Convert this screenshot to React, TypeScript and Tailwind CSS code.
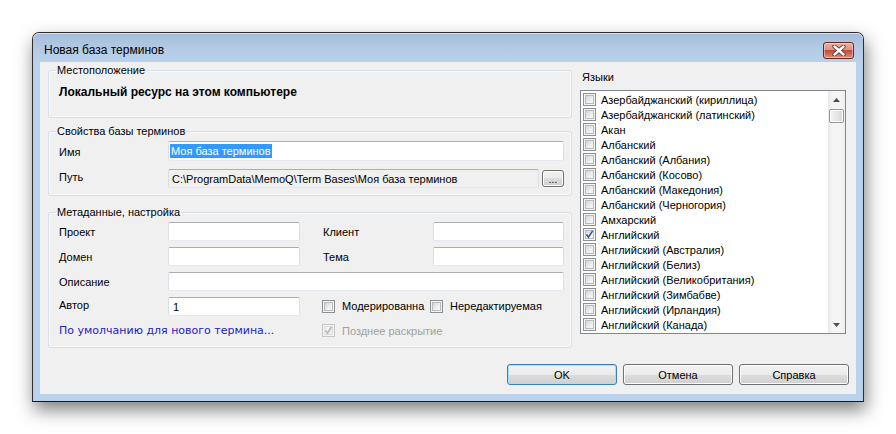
import React from "react";

const langs: [string, boolean][] = [
  ["Азербайджанский (кириллица)", false],
  ["Азербайджанский (латинский)", false],
  ["Акан", false],
  ["Албанский", false],
  ["Албанский (Албания)", false],
  ["Албанский (Косово)", false],
  ["Албанский (Македония)", false],
  ["Албанский (Черногория)", false],
  ["Амхарский", false],
  ["Английский", true],
  ["Английский (Австралия)", false],
  ["Английский (Белиз)", false],
  ["Английский (Великобритания)", false],
  ["Английский (Зимбабве)", false],
  ["Английский (Ирландия)", false],
  ["Английский (Канада)", false],
];

function Check({ checked = false, disabled = false }: { checked?: boolean; disabled?: boolean }) {
  return (
    <span
      className={
        "relative block w-[13px] h-[13px] shrink-0 border p-[1px] " +
        (disabled ? "border-[#c6c6c6] bg-[#f4f4f4]" : "border-[#8e8f8f] bg-[#f4f4f4]")
      }
    >
      <span
        className={
          "block w-full h-full border " +
          (disabled
            ? "border-[#dedede] bg-[#f0f0f0]"
            : "border-[#b7bbc0] bg-[linear-gradient(135deg,#d4d6da,#eeeff0_60%,#f8f8f8)]")
        }
      />
      {checked && (
        <svg className="absolute left-[1px] top-[1px]" width="9" height="9" viewBox="0 0 9 9">
          <path
            d="M1.5 4.5 L3.5 7.2 L7.6 0.8"
            fill="none"
            stroke={disabled ? "#b4b4b4" : "#3d4f86"}
            strokeWidth="1.5"
          />
        </svg>
      )}
    </span>
  );
}

function TextBox({ w, h = 19, children, readOnly = false }: { w?: string; h?: number; children?: React.ReactNode; readOnly?: boolean }) {
  return (
    <div
      className={
        "flex items-center rounded-[2px] border border-t-[#abadb3] border-x-[#dbdfe6] border-b-[#e3e9ef] pl-[1px] leading-[14px] whitespace-nowrap overflow-hidden " +
        (readOnly ? "bg-[#f0f0f0] " : "bg-white ") +
        (w ?? "flex-1")
      }
      style={{ height: h }}
    >
      {children}
    </div>
  );
}

function WinButton({ children, def = false, className = "" }: { children: React.ReactNode; def?: boolean; className?: string }) {
  return (
    <div
      className={
        "flex items-center justify-center rounded-[3px] border leading-[14px] bg-[linear-gradient(#f2f2f2,#ebebeb_50%,#dddddd_50%,#cfcfcf)] " +
        (def
          ? "border-[#3c7fb1] shadow-[inset_0_0_0_1px_#a9def4] "
          : "border-[#707070] shadow-[inset_0_0_0_1px_#fcfcfc] ") +
        className
      }
    >
      {children}
    </div>
  );
}

function Group({ title, h, children, className = "" }: { title: string; h: number; children: React.ReactNode; className?: string }) {
  return (
    <fieldset
      className={"border border-[#d5dfe5] rounded-[3px] shadow-[inset_0_0_0_1px_#fafafa] " + className}
      style={{ height: h }}
    >
      <legend className="ml-[7px] px-[1px] leading-[14px]">{title}</legend>
      {children}
    </fieldset>
  );
}

export default function App() {
  return (
    <div className="w-[896px] h-[434px] bg-white overflow-hidden pl-[32px] pt-[32px] font-['Liberation_Sans',Arial,sans-serif] text-[11px] text-black">
      <div className="w-[832px] h-[370px] flex flex-col rounded-t-[7px] border border-[#2e2e2e] border-b-[#1a1a1a] bg-[#b9d1ea] shadow-[2px_8px_18px_rgba(0,0,0,0.5)]">
        {/* title bar */}
        <div className="h-[29px] shrink-0 flex items-start justify-between pl-[11px] pr-[9px] rounded-t-[6px] bg-[linear-gradient(#a4bcda,#b5cce6_60%,#b9d1ea)] shadow-[inset_0_1px_0_rgba(255,255,255,0.55)]">
          <span className="mt-[10px] leading-[15px] text-[12px]">Новая база терминов</span>
          <div className="mt-[9px] w-[31px] h-[17px] rounded-[3px] border border-[#6b2a20] bg-[linear-gradient(#eab0a3,#dc9382_45%,#c24a34_46%,#c75a44_62%,#d99484)] flex items-center justify-center shadow-[inset_0_0_0_1px_rgba(255,220,210,0.5)]">
            <svg width="14" height="11" viewBox="0 0 14 11">
              <path d="M2.5 1.5 L11.5 9.5 M11.5 1.5 L2.5 9.5" stroke="#4a3a38" strokeWidth="4.2" strokeLinecap="round" />
              <path d="M2.5 1.5 L11.5 9.5 M11.5 1.5 L2.5 9.5" stroke="#ffffff" strokeWidth="2.4" strokeLinecap="round" />
            </svg>
          </div>
        </div>

        {/* client */}
        <div className="mx-[7px] mb-[7px] flex-1 bg-[#f0f0f0] flex flex-col pt-[1px]">
          <div className="flex h-[285px]">
            {/* left column */}
            <div className="ml-[8px] w-[524px] flex flex-col">
              <Group title="Местоположение" h={55}>
                <div className="pl-[10px] pt-[8px] font-bold text-[12px] leading-[14px]">Локальный ресурс на этом компьютере</div>
              </Group>

              <Group title="Свойства базы терминов" h={72} className="mt-[6px]">
                <div className="pl-[10px] pr-[7px] pt-[3px] flex flex-col">
                  <div className="flex items-center h-[20px]">
                    <span className="w-[109px] leading-[14px] mt-[1px]">Имя</span>
                    <TextBox h={20}>
                      <span className="bg-[#3399ff] text-white px-[1px]">Моя база терминов</span>
                    </TextBox>
                  </div>
                  <div className="flex items-center h-[19px] mt-[8px]">
                    <span className="w-[109px] leading-[14px] -mt-[4px]">Путь</span>
                    <TextBox h={19} readOnly>
                      <span className="pl-[2px]">C:\ProgramData\MemoQ\Term Bases\Моя база терминов</span>
                    </TextBox>
                    <WinButton className="ml-[3px] w-[22px] h-[17px] text-[10px]">
                      <span className="mt-[2px]">...</span>
                    </WinButton>
                  </div>
                </div>
              </Group>

              <Group title="Метаданные, настройка" h={143} className="mt-[9px]">
                <div className="pl-[10px] pt-[3px] flex flex-col gap-[6px]">
                  <div className="flex items-center h-[19px]">
                    <span className="w-[109px] leading-[14px]">Проект</span>
                    <TextBox w="w-[132px]" />
                    <span className="ml-[23px] w-[110px] leading-[14px]">Клиент</span>
                    <TextBox w="w-[131px]" />
                  </div>
                  <div className="flex items-center h-[19px]">
                    <span className="w-[109px] leading-[14px]">Домен</span>
                    <TextBox w="w-[132px]" />
                    <span className="ml-[23px] w-[110px] leading-[14px]">Тема</span>
                    <TextBox w="w-[131px]" />
                  </div>
                  <div className="flex items-center h-[19px]">
                    <span className="w-[109px] leading-[14px]">Описание</span>
                    <TextBox w="w-[396px]" />
                  </div>
                  <div className="flex items-center h-[19px]">
                    <span className="w-[109px] leading-[14px] -mt-[3px]">Автор</span>
                    <TextBox w="w-[132px]">
                      <span className="pl-[3px]">1</span>
                    </TextBox>
                    <div className="ml-[22px] w-[108px] flex items-center">
                      <Check />
                      <span className="ml-[7px] leading-[14px] -mt-[2px]">Модерированна</span>
                    </div>
                    <div className="flex items-center">
                      <Check />
                      <span className="ml-[7px] leading-[14px] -mt-[2px]">Нередактируемая</span>
                    </div>
                  </div>
                  <div className="flex items-center h-[19px] -mt-[1px]">
                    <span className="w-[263px] leading-[14px] font-['DejaVu_Sans',Verdana,sans-serif] text-[11px] text-[#2222c4]">
                      По умолчанию для нового термина...
                    </span>
                    <Check checked disabled />
                    <span className="ml-[7px] leading-[14px] text-[#a0a0a0]">Позднее раскрытие</span>
                  </div>
                </div>
              </Group>
            </div>

            {/* right column */}
            <div className="ml-[8px] w-[266px] flex flex-col pt-[7px]">
              <span className="pl-[2px] leading-[14px]">Языки</span>
              <div className="mt-[6px] h-[244px] flex border border-[#828790] bg-white overflow-hidden">
                <div className="flex-1 flex flex-col pt-[1px] pl-[2px] overflow-hidden">
                  {langs.map(([name, c]) => (
                    <div key={name} className="h-[15px] shrink-0 flex items-center">
                      <Check checked={c} />
                      <span className="ml-[5px] leading-[14px] whitespace-nowrap">{name}</span>
                    </div>
                  ))}
                </div>
                <div className="w-[17px] flex flex-col bg-[linear-gradient(90deg,#e9e9e9,#f5f5f5_25%,#f5f5f5_75%,#ededed)]">
                  <div className="h-[17px] flex items-center justify-center">
                    <svg width="7" height="4" viewBox="0 0 7 4">
                      <path d="M0 4 L3.5 0 L7 4 Z" fill="#4d4d4d" />
                    </svg>
                  </div>
                  <div className="mx-[1px] mt-[1px] h-[14px] rounded-[2px] border border-[#979797] bg-[linear-gradient(90deg,#f4f4f4,#e6e6e6_50%,#d6d6d6)] shadow-[inset_0_0_0_1px_#fbfbfb]" />
                  <div className="flex-1" />
                  <div className="h-[17px] flex items-center justify-center">
                    <svg width="7" height="4" viewBox="0 0 7 4">
                      <path d="M0 0 L7 0 L3.5 4 Z" fill="#4d4d4d" />
                    </svg>
                  </div>
                </div>
              </div>
            </div>
          </div>

          {/* buttons */}
          <div className="mt-[16px] flex justify-end gap-[6px] pr-[7px]">
            <WinButton def className="w-[110px] h-[21px]">OK</WinButton>
            <WinButton className="w-[110px] h-[21px]">Отмена</WinButton>
            <WinButton className="w-[110px] h-[21px]">Справка</WinButton>
          </div>
        </div>
      </div>
    </div>
  );
}
